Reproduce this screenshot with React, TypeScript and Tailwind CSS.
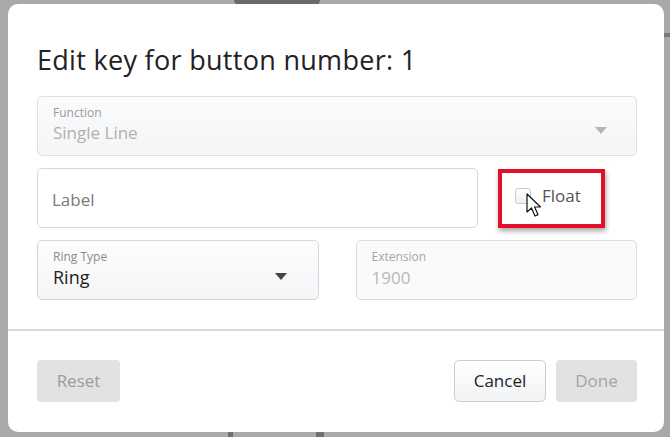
import { useState } from 'react';

function Caret({ className }: { className: string }) {
  return (
    <svg width="12" height="7" viewBox="0 0 12 7" className={className}>
      <path d="M0 0 L12 0 L6 7 Z" fill="currentColor" />
    </svg>
  );
}

function Cursor() {
  return (
    <svg width="20" height="26" viewBox="0 0 20 26" className="absolute left-[526px] top-[193px]">
      <path
        d="M1 1 L1 19 L5.5 15 L9 23 L12 21.6 L8.6 14 L14.5 14 Z"
        fill="#ffffff"
        stroke="#111111"
        strokeWidth="1.2"
        strokeLinejoin="round"
      />
    </svg>
  );
}

export default function App() {
  const [label, setLabel] = useState('');
  const [float, setFloat] = useState(false);

  return (
    <div
      className="relative w-[670px] h-[437px] overflow-hidden bg-[#a9a9a9]"
      style={{ fontFamily: '"Open Sans", "Noto Sans", sans-serif' }}
    >
      {/* faint page behind the overlay */}
      <div className="absolute left-[234px] top-0 w-[86px] h-[6px] rounded-b-full bg-[#6a6a6a]" />
      <div className="absolute right-0 top-[33px] w-[6px] h-[4px] bg-[#7a7a7a]" />
      <div className="absolute left-[228px] bottom-0 w-[5px] h-[5px] bg-[#6f6f6f]" />
      <div className="absolute left-[316px] bottom-0 w-[8px] h-[5px] bg-[#6f6f6f]" />

      <div className="absolute left-[8px] top-[4px] w-[656px] h-[428px] rounded-[10px] bg-white flex flex-col">
        <div className="pl-[29px] pr-[27px] pt-[40px]">
          <h1 className="text-[27px] leading-[32px] font-medium text-[#222222] tracking-[0.3px]">Edit key for button number: 1</h1>

          <div className="mt-[20px] h-[60px] w-[600px] rounded-[5px] border border-[#dde1e5] bg-gradient-to-b from-[#fbfbfc] to-[#f3f5f7] px-[15px] pt-[8px] flex items-start justify-between">
            <div className="flex flex-col">
              <span className="text-[12px] leading-[16px] text-[#9a9a9a]">Function</span>
              <span className="text-[17px] leading-[23px] text-[#b0b0b0]">Single Line</span>
            </div>
            <Caret className="mt-[22px] mr-[14px] text-[#b5b5b5]" />
          </div>

          <div className="mt-[12px] flex items-center">
            <input
              value={label}
              onChange={(e) => setLabel(e.target.value)}
              placeholder="Label"
              className="h-[60px] w-[441px] rounded-[5px] border border-[#d5d9dd] bg-white px-[14px] pt-[2px] text-[17px] text-[#333] placeholder:text-[#7a7a7a] focus:outline-none"
            />
            <div className="ml-[20px] h-[59px] w-[107px] border-[4px] border-[#e3102b] shadow-[1px_3px_5px_rgba(0,0,0,0.35)] flex items-center pl-[13px] pb-[4px]">
              <button
                onClick={() => setFloat(!float)}
                className="w-[16px] h-[16px] rounded-[3px] border border-[#c8ccd0] bg-gradient-to-b from-[#ffffff] to-[#eef0f2] flex items-center justify-center"
              >
                {float && <span className="text-[11px] leading-none text-[#333]">✓</span>}
              </button>
              <span className="ml-[11px] text-[17px] text-[#555555]">Float</span>
            </div>
          </div>

          <div className="mt-[12px] flex gap-[37px]">
            <div className="h-[60px] w-[282px] rounded-[5px] border border-[#d2d7dc] bg-gradient-to-b from-[#fdfdfd] to-[#f3f5f7] px-[15px] pt-[8px] flex items-start justify-between">
              <div className="flex flex-col">
                <span className="text-[12px] leading-[16px] text-[#8a8a8a]">Ring Type</span>
                <span className="text-[18px] leading-[25px] text-[#222222]">Ring</span>
              </div>
              <Caret className="mt-[24px] mr-[16px] text-[#444444]" />
            </div>
            <div className="h-[60px] w-[282px] rounded-[5px] border border-[#dadee2] bg-[#fafafa] px-[15px] pt-[8px] flex flex-col">
              <span className="text-[12px] leading-[16px] text-[#a5a5a5]">Extension</span>
              <span className="text-[17px] leading-[25px] text-[#b8b8b8]">1900</span>
            </div>
          </div>
        </div>

        <div className="mt-[29px] h-[2px] bg-[#d2dbe4]" />

        <div className="pl-[29px] pr-[27px] mt-[29px] flex items-center">
          <button className="h-[42px] w-[83px] rounded-[4px] bg-[#e2e2e2] text-[17px] text-[#9c9c9c]">Reset</button>
          <div className="ml-auto flex gap-[10px]">
            <button className="h-[42px] w-[92px] rounded-[5px] border border-[#c9cdd1] bg-gradient-to-b from-[#ffffff] to-[#f1f3f5] text-[17px] text-[#222222]">
              Cancel
            </button>
            <button className="h-[42px] w-[81px] rounded-[4px] bg-[#e2e2e2] text-[17px] text-[#a5a5a5]">Done</button>
          </div>
        </div>
      </div>

      <Cursor />
    </div>
  );
}
